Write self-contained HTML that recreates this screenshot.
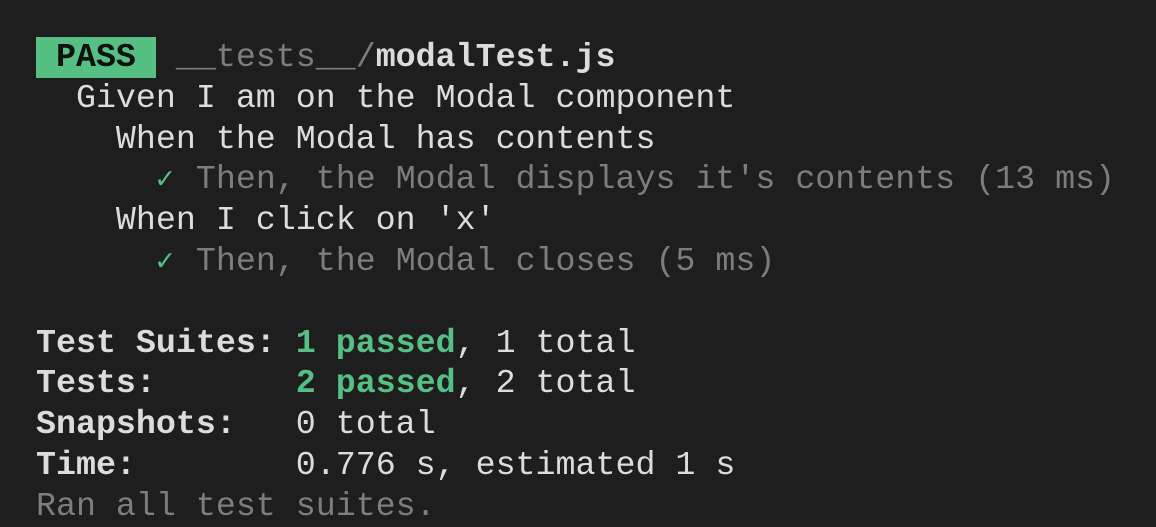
<html><head><style>
body{margin:0;background:#1e1e1e;width:1156px;height:526px;overflow:hidden}
pre{margin:0;position:absolute;left:36px;top:37px;font-family:"Liberation Mono",monospace;font-size:33.3px;line-height:40.8px;color:#dcdcdc}
.p{background:#55bf84;color:#111;font-weight:bold;padding:1px 0 2px}
.g{color:#7d7d7d}.k{color:#55bf84;display:inline-block;width:20px;line-height:0;font-family:"DejaVu Sans Mono",monospace;font-size:30px}.b{font-weight:bold}.gb{color:#55bf84;font-weight:bold}
</style></head><body><pre><span class="p"> PASS </span> <span class="g">__tests__/</span><span class="b">modalTest.js</span>
  Given I am on the Modal component
    When the Modal has contents
      <span class="k">✓</span> <span class="g">Then, the Modal displays it's contents (13 ms)</span>
    When I click on 'x'
      <span class="k">✓</span> <span class="g">Then, the Modal closes (5 ms)</span>

<span class="b">Test Suites: </span><span class="gb">1 passed</span>, 1 total
<span class="b">Tests:       </span><span class="gb">2 passed</span>, 2 total
<span class="b">Snapshots:   </span>0 total
<span class="b">Time:        </span>0.776 s, estimated 1 s
<span class="g">Ran all test suites.</span></pre></body></html>
